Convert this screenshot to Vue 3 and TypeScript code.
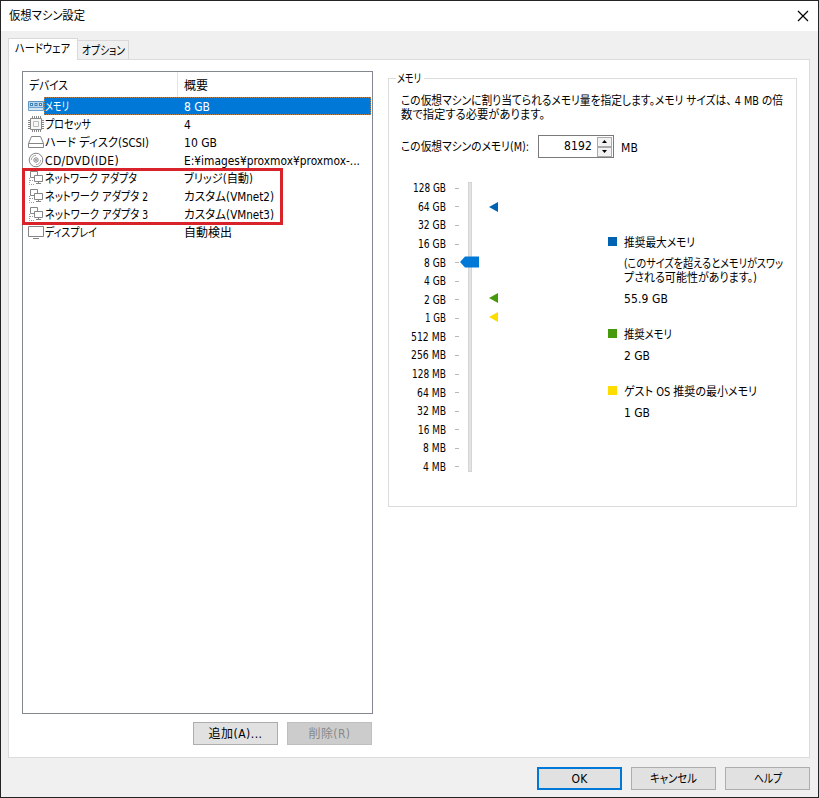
<script setup lang="ts">
import type { Directive } from 'vue'

interface Device {
  icon: 'memory' | 'cpu' | 'disk' | 'disc' | 'network' | 'display'
  name: string
  nameWidth: number
  summary: string
  summaryWidth: number
}

const devices: Device[] = [
  { icon: 'memory', name: 'メモリ', nameWidth: 24, summary: '8 GB', summaryWidth: 26 },
  { icon: 'cpu', name: 'プロセッサ', nameWidth: 46, summary: '4', summaryWidth: 7 },
  { icon: 'disk', name: 'ハード ディスク(SCSI)', nameWidth: 104, summary: '10 GB', summaryWidth: 33 },
  { icon: 'disc', name: 'CD/DVD(IDE)', nameWidth: 74, summary: 'E:¥images¥proxmox¥proxmox-...', summaryWidth: 176 },
  { icon: 'network', name: 'ネットワーク アダプタ', nameWidth: 92, summary: 'ブリッジ(自動)', summaryWidth: 69 },
  { icon: 'network', name: 'ネットワーク アダプタ 2', nameWidth: 103, summary: 'カスタム(VMnet2)', summaryWidth: 90 },
  { icon: 'network', name: 'ネットワーク アダプタ 3', nameWidth: 103, summary: 'カスタム(VMnet3)', summaryWidth: 90 },
  { icon: 'display', name: 'ディスプレイ', nameWidth: 52, summary: '自動検出', summaryWidth: 48 },
]

const sizes: [string, number][] = [
  ['128 GB', 33], ['64 GB', 28], ['32 GB', 28], ['16 GB', 28], ['8 GB', 22], ['4 GB', 22], ['2 GB', 22], ['1 GB', 21],
  ['512 MB', 35], ['256 MB', 35], ['128 MB', 34], ['64 MB', 29], ['32 MB', 29], ['16 MB', 28], ['8 MB', 23], ['4 MB', 23],
]

// Makes a label occupy its dialog width: condensed when too long, tracked out when too short.
const fit = (el: HTMLElement, width: number) => {
  const count = Array.from(el.textContent ?? '').length
  const natural = el.getBoundingClientRect().width
  if (natural > width) {
    el.style.width = `${width}px`
    el.style.transform = `scaleX(${width / natural})`
  } else {
    el.style.letterSpacing = `${(width - natural) / count}px`
  }
}
const vFit: Directive<HTMLElement, number> = {
  mounted: (el, binding) => fit(el, binding.value),
}
</script>

<template>
  <div class="window">
    <header class="titlebar">
      <span v-fit="76" class="t">仮想マシン設定</span>
      <svg class="close" width="12" height="12" viewBox="0 0 12 12"><path d="M1 1 11 11M11 1 1 11" /></svg>
    </header>

    <nav class="tabs">
      <div class="tab active"><span v-fit="55" class="t">ハードウェア</span></div>
      <div class="tab"><span v-fit="43" class="t">オプション</span></div>
    </nav>

    <main class="page">
      <section class="left">
        <div class="list">
          <div class="list-head">
            <div class="col-name"><span v-fit="39" class="t">デバイス</span></div>
            <div class="col-sum"><span v-fit="24" class="t">概要</span></div>
          </div>
          <div v-for="(d, i) in devices" :key="i" class="row" :class="{ selected: i === 0 }">
            <svg class="icon" width="16" height="16" viewBox="0 0 16 16">
              <template v-if="d.icon === 'memory'">
                <path d="M.5 3.5h15v6H.5z" fill="#b9d7ef" stroke="#5b93c0" />
                <path d="M2 5h3v3H2zM6.5 5h3v3h-3zM11 5h3v3h-3z" fill="#3f7fb2" />
                <path d="M3 6h1v1H3zM7.5 6h1v1h-1zM12 6h1v1h-1z" fill="#fff" />
                <path d="M.5 9.5v3h15v-3z" fill="#d5e7f5" stroke="#6fa3cb" />
              </template>
              <g v-else-if="d.icon === 'cpu'" fill="none" stroke="#888">
                <path d="M2.5 2.5h11v11h-11z" fill="#f8f8f8" />
                <path d="M4.5 0v2M6.5 0v2M8.5 0v2M10.5 0v2M12.5 0v2M4.5 14v2M6.5 14v2M8.5 14v2M10.5 14v2M12.5 14v2M0 4.5h2M0 6.5h2M0 8.5h2M0 10.5h2M0 12.5h2M14 4.5h2M14 6.5h2M14 8.5h2M14 10.5h2M14 12.5h2" />
                <path d="M5.5 5.5h5v5h-5z" stroke="#bbb" />
              </g>
              <g v-else-if="d.icon === 'disk'" fill="none" stroke="#858585">
                <path d="M3.5 2.5h9l3 7v4H.5v-4zM.5 9.5h15" />
              </g>
              <g v-else-if="d.icon === 'disc'" fill="none" stroke="#858585">
                <circle cx="8" cy="8" r="6.8" /><circle cx="8" cy="8" r="2.2" />
                <path d="M8 3.3A4.7 4.7 0 0 0 3.3 8M8 12.7A4.7 4.7 0 0 0 12.7 8" stroke="#aaa" /><circle cx="8" cy="8" r=".6" />
              </g>
              <g v-else-if="d.icon === 'network'" fill="none" stroke="#858585">
                <path d="M6 7.5H2.5v-6h7V5" />
                <path d="M6.5 5.5h8v6h-8z" fill="#fff" />
                <path d="M10.5 11.5v2M8 13.5h5" />
                <path d="M1.5 8v6.5H7M2 10.5h4" stroke="#999" stroke-dasharray="1 1" />
              </g>
              <g v-else fill="none" stroke="#858585">
                <path d="M.5 2.5h15v10H.5zM5 14.5h6" />
              </g>
            </svg>
            <div class="row-body">
              <div class="row-name"><span v-fit="d.nameWidth" class="t">{{ d.name }}</span></div>
              <div class="row-sum"><span v-fit="d.summaryWidth" class="t">{{ d.summary }}</span></div>
            </div>
          </div>
          <div class="highlight"></div>
        </div>
        <div class="actions">
          <button class="btn"><span v-fit="54" class="t">追加(A)...</span></button>
          <button class="btn disabled"><span v-fit="42" class="t">削除(R)</span></button>
        </div>
      </section>

      <section class="group">
        <div class="group-title"><span v-fit="24" class="t">メモリ</span></div>
        <p class="intro">
          <span v-fit="382" class="t">この仮想マシンに割り当てられるメモリ量を指定します。メモリ サイズは、 4 MB の倍</span>
          <span v-fit="144" class="t">数で指定する必要があります。</span>
        </p>
        <div class="amount">
          <label><span v-fit="128" class="t">この仮想マシンのメモリ(M):</span></label>
          <div class="spin">
            <span v-fit="28" class="t value">8192</span>
            <div class="arrows">
              <i><svg width="5" height="3" viewBox="0 0 5 3"><path d="M0 3 2.5 0 5 3z" /></svg></i>
              <i><svg width="5" height="3" viewBox="0 0 5 3"><path d="M0 0 2.5 3 5 0z" /></svg></i>
            </div>
          </div>
          <span v-fit="17" class="t">MB</span>
        </div>

        <div class="scale-area">
          <div class="scale">
            <div v-for="s in sizes" :key="s[0]" class="tick"><span v-fit="s[1]" class="t">{{ s[0] }}</span><b></b></div>
          </div>
          <div class="track">
            <svg class="thumb" width="19" height="12" viewBox="0 0 19 12"><path d="M0 6 5 .5H19v11H5z" /></svg>
          </div>
          <div class="markers">
            <svg class="mark max" width="9" height="10" viewBox="0 0 9 10"><path d="M0 5 9 0v10z" /></svg>
            <svg class="mark rec" width="9" height="10" viewBox="0 0 9 10"><path d="M0 5 9 0v10z" /></svg>
            <svg class="mark min" width="9" height="10" viewBox="0 0 9 10"><path d="M0 5 9 0v10z" /></svg>
          </div>
          <div class="legend">
            <div class="item first">
              <em class="max"></em>
              <div>
                <p><span v-fit="71" class="t">推奨最大メモリ</span></p>
                <div class="note">
                  <span v-fit="159" class="t">(このサイズを超えるとメモリがスワッ</span>
                  <span v-fit="133" class="t">プされる可能性があります。)</span>
                </div>
                <p><span v-fit="44" class="t">55.9 GB</span></p>
              </div>
            </div>
            <div class="item second">
              <em class="rec"></em>
              <div><p><span v-fit="48" class="t">推奨メモリ</span></p><p><span v-fit="26" class="t">2 GB</span></p></div>
            </div>
            <div class="item">
              <em class="min"></em>
              <div><p><span v-fit="133" class="t">ゲスト OS 推奨の最小メモリ</span></p><p><span v-fit="26" class="t">1 GB</span></p></div>
            </div>
          </div>
        </div>
      </section>
    </main>

    <footer class="footer">
      <button class="btn primary"><span v-fit="16" class="t">OK</span></button>
      <button class="btn"><span v-fit="47" class="t">キャンセル</span></button>
      <button class="btn"><span v-fit="28" class="t">ヘルプ</span></button>
    </footer>
  </div>
</template>

<style>
body { margin: 0; overflow: hidden; }
</style>

<style scoped>
* { box-sizing: border-box; }
.window {
  width: 819px; height: 798px; display: flex; flex-direction: column;
  background: #f0f0f0; border: 1px solid #242424; color: #000;
  font: 12px/14px "DejaVu Sans Condensed", "Noto Sans CJK JP", sans-serif;
  font-feature-settings: "palt";
}
.t { display: inline-block; white-space: pre; line-height: 14px; transform-origin: 0 50%; }
p { margin: 0; }
svg { display: block; }
.titlebar { height: 30px; flex: none; background: #fff; display: flex; align-items: center; justify-content: space-between; padding: 0 9px 0 8px; }
.close { fill: none; stroke: #000; stroke-width: 1.2; }
.tabs { height: 28px; flex: none; display: flex; align-items: flex-end; padding-left: 7px; }
.tab { height: 19px; width: 51px; border: 1px solid #d9d9d9; border-width: 1px 1px 0 0; display: flex; align-items: center; justify-content: center; padding-top: 1px; }
.tab.active { height: 22px; width: 70px; margin-bottom: -1px; border-left-width: 1px; background: #fff; z-index: 1; padding: 0 2px 2px 0; }
.page { width: 802px; height: 699px; flex: none; margin-left: 7px; border: 1px solid #dcdcdc; background: #fff; display: flex; align-items: flex-start; gap: 15px; padding: 11px 0 0 13px; }
.left { width: 351px; flex: none; }
.list { height: 643px; position: relative; border: 1px solid #828790; }
.list-head { display: flex; height: 25px; }
.col-name { width: 155px; border-right: 1px solid #e5e5e5; padding: 7px 0 0 6px; }
.col-sum { padding: 7px 0 0 6px; }
.row { height: 18px; display: flex; padding: 0 1px 0 5px; }
.icon { flex: none; margin-top: 1px; }
.row-body { flex: 1; display: flex; padding: 3px 0 0 1px; }
.row-name { width: 139px; flex: none; }
.selected .row-body { background: #0078d7; color: #fff; outline: 1px dotted #b08050; outline-offset: -1px; }
.highlight { position: absolute; left: -1px; top: 96px; width: 261px; height: 57px; border: 3px solid #d8232b; }
.actions { display: flex; justify-content: flex-end; gap: 9px; padding: 8px 1px 0 0; }
.btn { width: 85px; height: 23px; padding: 0; border: 1px solid #adadad; background: #e1e1e1; color: #000; font: inherit; font-feature-settings: inherit; display: flex; align-items: center; justify-content: center; }
.btn.disabled { background: #ccc; border-color: #bfbfbf; color: #888; }
.btn.primary { border: 2px solid #0078d7; }
.group { width: 409px; height: 429px; margin-top: 7px; border: 1px solid #dcdcdc; }
.group-title { width: 28px; height: 14px; margin: -7px 0 0 7px; padding-left: 1px; background: #fff; }
.intro { padding: 8px 0 0 12px; display: flex; flex-direction: column; align-items: flex-start; }
.amount { display: flex; align-items: center; height: 23px; margin-top: 13px; padding-left: 12px; }
.amount label { width: 137px; padding-top: 1px; }
.amount > .t { margin-top: 2px; }
.spin { width: 76px; height: 23px; border: 1px solid #7a7a7a; display: flex; align-items: center; justify-content: flex-end; padding-right: 1px; margin-right: 7px; }
.value { margin: -2px 5px 0 0; }
.arrows { width: 15px; height: 20px; display: flex; flex-direction: column; }
.arrows i { flex: 1; border: 1px solid #aaa; background: #f2f2f2; display: flex; align-items: center; justify-content: center; }
.scale-area { display: flex; align-items: flex-start; padding-top: 21px; }
.scale { width: 70px; }
.tick { height: 18.58px; display: flex; align-items: center; justify-content: flex-end; gap: 9px; }
.tick b { width: 4px; height: 1px; background: #b8b8b8; }
.track { width: 4px; height: 290px; margin: 3px 0 0 9px; background: #e3e3e3; border: 1px solid #d5d5d5; position: relative; }
.thumb { position: absolute; left: -9px; top: 73px; fill: #0078d7; }
.markers { width: 136px; height: 290px; position: relative; }
.mark { position: absolute; left: 17px; }
.mark.max { top: 23px; fill: #0063b1; }
.mark.rec { top: 114px; fill: #459a0c; }
.mark.min { top: 133px; fill: #fddc00; }
.legend { padding-top: 57px; }
.item { display: flex; gap: 7px; }
.item em { width: 9px; height: 9px; flex: none; margin-top: 1px; }
em.max { background: #0063b1; }
em.rec { background: #459a0c; }
em.min { background: #fddc00; }
.item p { height: 14px; }
.item p + p { margin-top: 7px; }
.note { display: flex; flex-direction: column; align-items: flex-start; margin: 7px 0; }
.first { margin-bottom: 22px; }
.second { margin-bottom: 22px; }
.footer { display: flex; justify-content: flex-end; gap: 9px; padding: 9px 8px 0 0; }
</style>
